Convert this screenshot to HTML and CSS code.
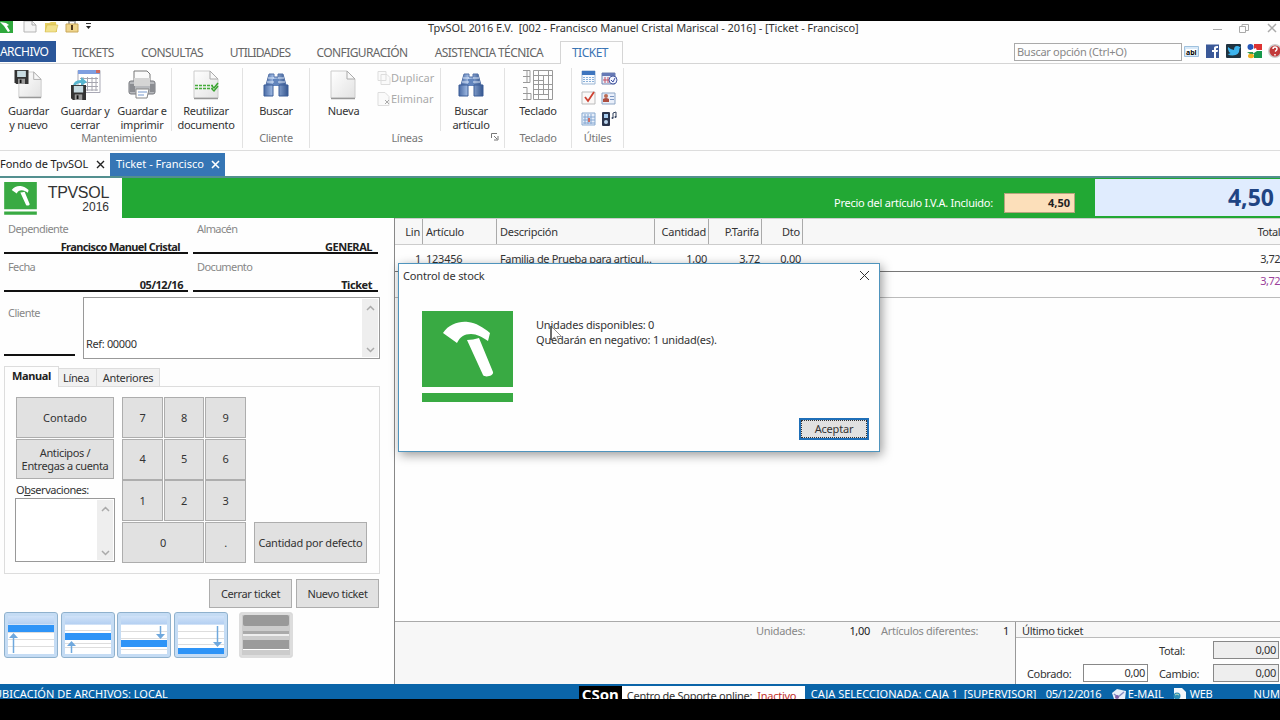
FILE: index.html
```html
<!DOCTYPE html>
<html lang="es">
<head>
    <meta charset="UTF-8">
    <title>TpvSOL 2016 E.V.</title>
    <link rel="stylesheet" href="styles.css">
</head>
<body>
    <!-- shared symbols -->
    <svg class="defs">
        <defs>
            <linearGradient id="paper" x1="0" y1="0" x2="1" y2="1"><stop offset="0" stop-color="#fff"/><stop offset="1" stop-color="#e2e2e2"/></linearGradient>
            <linearGradient id="steel" x1="0" x2="1"><stop offset="0" stop-color="#4a6ba5"/><stop offset=".4" stop-color="#a9c3ea"/><stop offset="1" stop-color="#35568f"/></linearGradient>
            <symbol id="sheet" viewBox="0 0 28 32">
                <path d="M2 2h16l8 8v19H2z" fill="url(#paper)" stroke="#ccc"/>
                <path d="M2 29.500h24" stroke="#999" stroke-width="1.500"/>
                <path d="M18 2v8h8z" fill="#f8f8f8" stroke="#aaa"/>
            </symbol>
            <symbol id="floppy" viewBox="0 0 16 16">
                <path d="M0 0h16v16H2l-2-2z" fill="#333"/>
                <path d="M3 1h10v7H3z" fill="#c9dce2"/>
                <path d="M4 10h8v6H4z" fill="#999"/><path d="M6 11h2v4H6z" fill="#111"/>
            </symbol>
            <symbol id="binoculars" viewBox="0 0 26 24">
                <path d="M6 1h5v3h4V1h5l3 11H3z" fill="url(#steel)" stroke="#5573a8"/>
                <path d="M10 6h6v7h-6z" fill="#6285bd"/>
                <path d="M1 12h9v11H1zM16 12h9v11h-9z" fill="url(#steel)" stroke="#3b5c97"/>
                <path d="M5 5h6M15 5h6M4 9h7M15 9h7" stroke="#dbe7f8"/>
            </symbol>
            <symbol id="hammer" viewBox="0 0 91 92">
                <path d="M0 0h91v76H0zM0 82h91v9H0z" fill="#39aa43"/>
                <path d="M21 22C27 13 37 10 46 11c8 1 15 5 22 11l-2 8c-6-4-11-7-17-7-7 0-11 3-14 9Z" fill="#fff"/>
                <path d="M45 29q6 0 12-2l14 34c1 4-8 6-10 3Z" fill="#fff"/>
            </symbol>
        </defs>
    </svg>

    <div class="app">
        <div class="titlebar">
            <div class="quick">
                <svg width="92" height="14" viewBox="0 0 92 14">
                    <path d="M0 0h13v12H0z" fill="#2fa83c"/><path d="M0 1l6 1 3 2-2 1 3 5-2 1-4-6z" fill="#fff"/>
                    <path d="M24 0h8l4 4v7H24z" fill="#f5f5f5" stroke="#b5b5b5"/><path d="M32 0v4h4" fill="none" stroke="#aaa"/>
                    <path d="M45 2h4l2-1h5l1 10H45z" fill="#e6cf62"/><path d="M47 4h11l-2 7H45z" fill="#f2e28c" stroke="#cdb344" stroke-width=".5"/>
                    <path d="M69 4V0h6v4" fill="none" stroke="#aaa" stroke-width="2"/><path d="M66 3h12v8H66z" fill="#efd58c" stroke="#c9a758"/><path d="M72 4v5" stroke="#513b20" stroke-width="2"/>
                    <path d="M86 2.500h5" stroke="#333"/><path d="M86 5h5l-2.500 3z" fill="#222"/>
                </svg>
            </div>
            <span class="caption">TpvSOL 2016 E.V.&nbsp; [002 - Francisco Manuel Cristal Mariscal - 2016] - [Ticket - Francisco]</span>
            <svg class="winbtns" width="72" height="14" viewBox="0 0 72 14">
                <g fill="none" stroke="#aaa"><path d="M5 8.500h9M31.500 5.500h6v6h-6zM34 5V3.500h6.500v6H38"/><path d="M60 3l8 8M68 3l-8 8" stroke-width="1.500"/></g>
            </svg>
        </div>

        <div class="menu">
            <div class="file">ARCHIVO</div>
            <div class="tab m1">TICKETS</div>
            <div class="tab m2">CONSULTAS</div>
            <div class="tab m3">UTILIDADES</div>
            <div class="tab m4">CONFIGURACIÓN</div>
            <div class="tab m5">ASISTENCIA TÉCNICA</div>
            <div class="tab active">TICKET</div>
            <div class="search">Buscar opción (Ctrl+O)</div>
            <svg class="social" width="96" height="16" viewBox="0 0 96 16">
                <path d="M.5 3.500h14v10H.5z" fill="#d8e9f8" stroke="#9fc1de"/><path d="M2 6h11v6H2z" fill="#fff"/>
                <text x="2" y="11.500" class="abl">abl</text>
                <path d="M22 1.500h13V15H22z" fill="#3b5998"/><path d="M30 15V9h-2V7h2V5q0-2 3-2h1v2h-1q-1 0-1 1v1h2l-.4 2H32v6z" fill="#fff"/>
                <rect x="42" y="1" width="15" height="14" rx="1" fill="#20323f"/><path d="M44 4q3 3 6 3q0-4 3-4q2 0 2.500 1l1.500-.5-1.500 2q0 7-7 7-3 0-5-1.500 2 0 3-1-2-1-2-2.500-1-1-.5-3.500z" fill="#3db4ee"/>
                <path d="M63 1h15v14H63z" fill="#fff"/><path d="M70 1h8v6h-8z" fill="#d33"/><path d="M70 8h8v7h-8z" fill="#16984a"/><circle cx="66.500" cy="4" r="3" fill="#2757b8"/><path d="M63 9h6l1 2h-4z" fill="#2c9950"/><ellipse cx="67" cy="13" rx="3" ry="2.200" fill="#eeb020"/><path d="M67 7l5-2 1 3-3 2z" fill="#fff"/>
                <circle cx="91" cy="8" r="7" fill="#ccc"/><circle cx="91" cy="8" r="5.500" fill="#c23a3a"/><path d="M89 6q0-2 2-2t2 2q0 1-2 2.500M91 11v1.500" fill="none" stroke="#fff" stroke-width="1.500"/>
            </svg>
        </div>

        <div class="ribbon">
            <div class="group">
                <div class="tools">
                    <div class="tool w57">
                        <svg width="32" height="32"><use href="#sheet" x="4" y="0" width="26" height="32"/><use href="#floppy" x="1" y="1" width="15" height="14"/></svg>
                        <span>Guardar<br>y nuevo</span>
                    </div>
                    <div class="tool w56">
                        <svg width="32" height="32">
                            <path d="M9 1.500h22v22H9z" fill="#fff" stroke="#a9a9b5"/><path d="M9 1h22v4H9z" fill="#7f9fe0"/><path d="M27 1h4v3h-4z" fill="#d06a5d"/>
                            <path d="M14 8v14M18.500 8v14M23 8v14M27 8v14M11 9.500h18M11 13.500h18M11 17.500h18M11 21h18" stroke="#a6a6b0"/>
                            <path d="M4 18q0-7 8-7V8l6 5-6 4v-3q-5 0-6 4z" fill="#58b6cf"/><use href="#floppy" x="2" y="16" width="15" height="15"/>
                        </svg>
                        <span>Guardar y<br>cerrar</span>
                    </div>
                    <div class="tool w58">
                        <svg width="30" height="32">
                            <path d="M7 2h13l3 3v10H7z" fill="#fafafa" stroke="#777"/><rect x="2" y="12" width="26" height="13" rx="2" fill="#b7b9bd" stroke="#75777c"/>
                            <path d="M3 15h5v8H3zM23 15h5v8h-5z" fill="#8b8d92"/><path d="M7 9h16v8H7z" fill="#d5d5d5"/><path d="M9 20h13l-2 9H9z" fill="#fff" stroke="#888"/><path d="M11 23h9M11 26h6" stroke="#7798cc"/>
                        </svg>
                        <span>Guardar e<br>imprimir</span>
                    </div>
                    <div class="tool w71 cut">
                        <svg width="28" height="32"><use href="#sheet" width="28" height="32"/><path d="M3 16.500h18M3 19.500h18" stroke="#45ad3b" stroke-width="1.500" stroke-dasharray="3 1"/><path d="M20 17l2 2 4-5M20 20l2 2 4-5" fill="none" stroke="#38a42e" stroke-width="1.500"/></svg>
                        <span>Reutilizar<br>documento</span>
                    </div>
                </div>
                <div class="name n1">Mantenimiento</div>
            </div>
            <div class="group w67">
                <div class="tools"><div class="tool w67"><svg width="28" height="32"><use href="#binoculars" x="1" y="4" width="26" height="24"/></svg><span>Buscar</span></div></div>
                <div class="name">Cliente</div>
            </div>
            <div class="group">
                <div class="tools">
                    <div class="tool w66"><svg width="28" height="32"><use href="#sheet" x="-1" width="28" height="32"/></svg><span>Nueva</span></div>
                    <div class="small">
                        <div><svg width="14" height="16"><path d="M1 1.500h8v9H1zM4 4.500h6l3 3v7H4z" fill="#fafafa" stroke="#ddd"/></svg>Duplicar</div>
                        <div><svg width="14" height="16"><path d="M1 1.500h7l4 4v9H1z" fill="#fafafa" stroke="#ddd"/><path d="M8 9l4 4M12 9l-4 4" stroke="#aaa"/></svg>Eliminar</div>
                    </div>
                    <div class="tool w64 cut"><svg width="28" height="32"><use href="#binoculars" x="1" y="4" width="26" height="24"/></svg><span>Buscar<br>artículo</span></div>
                </div>
                <div class="name lines">Líneas<svg width="8" height="8"><path d="M.5 5V.5H6M3 3l3 3M7 3v4H3" fill="none" stroke="#777"/></svg></div>
            </div>
            <div class="group w67">
                <div class="tools"><div class="tool w67"><svg width="32" height="32"><path d="M1 1.500h7v12H1M5 2v12M1 7.500h7M1 18.500h4v12M1 24.500h8v6H1M11.500 1.500h19v29h-19zM16.500 2v28M21.500 7v18M26.500 2v28M12 6.500h19M12 11.500h9M12 15.500h19M12 20.500h19M12 25.500h15" fill="none" stroke="#999"/></svg><span>Teclado</span></div></div>
                <div class="name">Teclado</div>
            </div>
            <div class="group w52">
                <svg class="utils" width="40" height="60">
                    <g><path d="M3 2h13v13H3z" fill="#f7fafe" stroke="#9ab5d3"/><path d="M3 2h13v4H3z" fill="#3d75be"/><path d="M4 8.500h11M4 10.500h11M4 12.500h11" stroke="#89b0d8" stroke-dasharray="2 1"/></g>
                    <g><path d="M23 4h13v11H23z" fill="#e9effa" stroke="#7182ae"/><path d="M23 4h13v3H23z" fill="#6679b5"/><path d="M26 8v6M29 8v6M24 11h6" stroke="#c34e62"/><circle cx="34" cy="11" r="4" fill="#f2f5ff" stroke="#4a5ca2"/><path d="M32 11l2 2 2-4" fill="none" stroke="#3c4ea0"/></g>
                    <g><path d="M3 23h13v12H3z" fill="#faf8f7" stroke="#bbb"/><path d="M6 28l3 4 6-9" fill="none" stroke="#ce4131" stroke-width="1.800"/></g>
                    <g><path d="M23 24h13v11H23z" fill="#e9effa" stroke="#8da5c5"/><circle cx="27" cy="27" r="2" fill="#bc6b53"/><path d="M24 33v-3q3-2 6 0v3z" fill="#ad4d3f"/><path d="M31 27.500h4M31 30.500h4" stroke="#7b96c2"/></g>
                    <g><path d="M3 44h13v12H3z" fill="#e7effa" stroke="#88a9cf"/><path d="M6 45v10M9 45v10M12 45v10M4 48h12M4 51h12M4 54h12" stroke="#83a6d1"/><path d="M9 49h2v4H9z" fill="#cd6e66"/></g>
                    <g><rect x="23" y="43" width="8" height="14" rx="1" fill="#29344c"/><path d="M25 45h4v4h-4z" fill="#a7ccee"/><circle cx="27" cy="53" r="2" fill="#bbd4ec"/><path d="M34 49v-5l3-1v5" fill="none" stroke="#34435e"/><circle cx="33.500" cy="49" r="1" fill="#34435e"/><circle cx="36.500" cy="48" r="1" fill="#34435e"/></g>
                </svg>
                <div class="name">Útiles</div>
            </div>
        </div>

        <div class="docs">
            <div class="doc d1">Fondo de TpvSOL<svg width="9" height="9"><path d="M1 1l7 7M8 1L1 8" stroke="#222" stroke-width="1.400"/></svg></div>
            <div class="doc open">Ticket - Francisco<svg width="9" height="9"><path d="M1 1l7 7M8 1L1 8" stroke="#fff" stroke-width="1.600"/></svg></div>
        </div>

        <div class="brand">
            <div class="logo">
                <svg width="33" height="33"><use href="#hammer" width="33" height="33"/></svg>
                <div class="product"><b>TPVSOL</b><i>2016</i></div>
            </div>
            <span class="pricelabel">Precio del artículo I.V.A. Incluido:</span>
            <div class="price">4,50</div>
            <div class="total">4,50</div>
        </div>

        <div class="work">
            <div class="left">
                <div class="fields">
                    <div class="field"><label>Dependiente</label><b class="seller">Francisco Manuel Cristal</b></div>
                    <div class="field"><label>Almacén</label><b>GENERAL</b></div>
                    <div class="field"><label>Fecha</label><b class="date">05/12/16</b></div>
                    <div class="field"><label>Documento</label><b>Ticket</b></div>
                </div>
                <div class="client">
                    <div class="code">Cliente</div>
                    <div class="memo">
                        <span>Ref: 00000</span>
                        <div class="scroll"><svg width="9" height="6"><path d="M1 5l3.500-3.500L8 5"/></svg><svg width="9" height="6"><path d="M1 1l3.500 3.500L8 1"/></svg></div>
                    </div>
                </div>

                <div class="tabs"><b>Manual</b><span class="t2">Línea</span><span class="t3">Anteriores</span></div>
                <div class="panel">
                    <div class="col">
                        <div class="btn">Contado</div>
                        <div class="btn two">Anticipos /<br>Entregas a cuenta</div>
                        <div class="obs">O<u>b</u>servaciones:</div>
                        <div class="memo"><div class="scroll"><svg width="9" height="6"><path d="M1 5l3.500-3.500L8 5"/></svg><svg width="9" height="6"><path d="M1 1l3.500 3.500L8 1"/></svg></div></div>
                    </div>
                    <div class="keys">
                        <div class="btn">7</div><div class="btn">8</div><div class="btn">9</div>
                        <div class="btn">4</div><div class="btn">5</div><div class="btn">6</div>
                        <div class="btn">1</div><div class="btn">2</div><div class="btn">3</div>
                        <div class="btn zero">0</div><div class="btn">.</div>
                    </div>
                    <div class="btn qty">Cantidad por defecto</div>
                </div>
                <div class="actions"><div class="btn">Cerrar ticket</div><div class="btn">Nuevo ticket</div></div>

                <div class="nav">
                    <div class="navbtn"><svg width="46" height="38"><path d="M0 16.500h46M0 23.500h46M0 30.500h46" class="rule"/><path d="M0 9h46v7H0z" class="sel"/><path d="M5.500 37V20" class="stem"/><path d="M1 22h9l-4.500-5z" class="head-up"/></svg></div>
                    <div class="navbtn"><svg width="46" height="38"><path d="M0 14.500h46M0 27.500h46M0 31.500h46" class="rule"/><path d="M0 17h46v7H0z" class="sel"/><path d="M6.500 37V27" class="stem"/><path d="M2 30h9l-4.500-5z" class="head-up"/></svg></div>
                    <div class="navbtn"><svg width="46" height="38"><path d="M0 15.500h46M0 22.500h46M0 33.500h46" class="rule"/><path d="M0 24h46v7H0z" class="sel"/><path d="M39.500 10v10" class="stem"/><path d="M35 18h9l-4.500 5z" class="head-up"/></svg></div>
                    <div class="navbtn"><svg width="46" height="38"><path d="M0 15.500h46M0 22.500h46M0 28.500h46" class="rule"/><path d="M0 32h46v6H0z" class="sel"/><path d="M39.500 10v18" class="stem"/><path d="M35 26h9l-4.500 5z" class="head-up"/></svg></div>
                    <div class="navbtn off"><svg width="46" height="42"><rect width="46" height="11" rx="2" fill="#999"/><path d="M0 16h46v3H0z" fill="#aaa"/><path d="M0 19h46v2H0z" fill="#eee"/><rect y="25" width="46" height="9" fill="#9b9b9b"/><path d="M0 34h46v1H0z" fill="#fff"/></svg></div>
                </div>
            </div>

            <div class="right">
                <div class="row head">
                    <span class="c1">Lin</span><span class="c2">Artículo</span><span class="c3">Descripción</span><span class="c4">Cantidad</span><span class="c5">P.Tarifa</span><span class="c6">Dto</span><span class="c7">Total</span>
                </div>
                <div class="row">
                    <span class="c1">1</span><span class="c2">123456</span><span class="c3 desc">Familia de Prueba para articul...</span><span class="c4">1,00</span><span class="c5">3,72</span><span class="c6">0,00</span><span class="c7">3,72</span>
                </div>
                <div class="row sum"><span class="c7">3,72</span></div>
                <div class="blank"></div>
                <div class="foot">
                    <div class="counts"><span class="k1">Unidades:</span><em class="units">1,00</em><span class="k2">Artículos diferentes:</span><em>1</em></div>
                    <div class="last">
                        <div class="lasthead">Último ticket</div>
                        <div class="lastgrid">
                            <span></span><span></span><span>Total:</span><div class="num gray">0,00</div>
                            <span>Cobrado:</span><div class="num">0,00</div><span>Cambio:</span><div class="num gray">0,00</div>
                        </div>
                    </div>
                </div>
            </div>
        </div>

        <div class="status">
            <span class="place">UBICACIÓN DE ARCHIVOS: LOCAL</span>
            <span class="cson">CSon</span>
            <span class="support">Centro de Soporte online:&nbsp; <em>Inactivo</em></span>
            <span class="box">CAJA SELECCIONADA: CAJA 1&nbsp; [SUPERVISOR]</span>
            <span class="day">05/12/2016</span>
            <svg width="15" height="14"><path d="M1 6l5-4 9 2-1 8H3z" fill="#e8eef8"/><path d="M3 7l4 3 6-5" fill="none" stroke="#8890c4" stroke-width="1.500"/><circle cx="6" cy="10" r="2" fill="#8061a8"/></svg>
            <span class="mail">E-MAIL</span>
            <svg width="14" height="14"><path d="M1 1h8l4 4v9H1z" fill="#f4f7fa"/><circle cx="4" cy="9" r="3.500" fill="#2e8fb8"/><path d="M2 8q2-2 4 0" stroke="#bfe4ba" fill="none"/></svg>
            <span class="web">WEB</span>
            <span class="numlock">NUM</span>
        </div>
    </div>

    <div class="dialog">
        <div class="dtitle">Control de stock<svg width="11" height="11"><path d="M1 1l9 9M10 1l-9 9" stroke="#333"/></svg></div>
        <div class="dbody">
            <svg width="91" height="92"><use href="#hammer" width="91" height="92"/></svg>
            <p>Unidades disponibles: 0<br><span>Quedarán en negativo: 1 unidad(es).</span></p>
        </div>
        <div class="accept">Aceptar</div>
    </div>
    <svg class="cursor" width="13" height="18"><path d="M1 1v14l3.500-3 3 5 1.500-1-2-4.500h4.500z" fill="#fff" fill-opacity=".6" stroke="#777" stroke-width=".8"/><path d="M1 1v14" stroke="#111"/></svg>
</body>
</html>
```
FILE: styles.css
```css
* {
    box-sizing: border-box;
}

body {
    margin: 0;
    width: 1280px;
    height: 720px;
    padding: 21px 0;
    background: #000;
    overflow: hidden;
    font-family: "Noto Sans", "Open Sans", sans-serif;
    font-size: 11px;
    line-height: 14px;
    letter-spacing: -0.25px;
    color: #333;
    white-space: nowrap;
}

svg {
    display: block;
    flex: none;
}

i, em {
    font-style: normal;
}

.defs {
    position: absolute;
    width: 0;
    height: 0;
}

.app {
    height: 678px;
    background: #fefefe;
    display: flex;
    flex-direction: column;
    overflow: hidden;
}

/* title bar */
.titlebar {
    height: 20px;
    display: flex;
    justify-content: space-between;
}

.quick {
    width: 428px;
}

.caption {
    width: 784px;
    letter-spacing: -0.08px;
}

.winbtns {
    margin-left: -4px;
}

/* menu */
.menu {
    height: 23px;
    display: flex;
    border-bottom: 1px solid #d5d5d5;
    font-size: 12px;
    color: #666;
    line-height: 23px;
    letter-spacing: -0.6px;
}

.file {
    width: 56px;
    height: 21px;
    background: #2a5699;
    color: #fff;
    line-height: 22px;
    letter-spacing: -0.55px;
}

.tab {
    text-align: center;
}

.m1 { width: 74px; }
.m2 { width: 84px; }
.m3 { width: 92px; letter-spacing: -0.75px; }
.m4 { width: 112px; }
.m5 { width: 142px; }

.active {
    width: 63px;
    height: 23px;
    padding-right: 3px;
    border: 1px solid #d5d5d5;
    border-bottom: none;
    background: #fefefe;
    color: #3a74b4;
    line-height: 21px;
    letter-spacing: -0.5px;
}

.search {
    width: 168px;
    height: 18px;
    margin: 2px 2px 0 391px;
    padding-left: 2px;
    border: 1px solid #aaa;
    font-size: 11px;
    line-height: 15px;
    letter-spacing: -0.28px;
    color: #888;
}

.social {
    margin-top: 2px;
}

.abl {
    font-size: 7px;
    font-weight: bold;
    letter-spacing: 0;
}

/* ribbon */
.ribbon {
    height: 87px;
    display: flex;
    border-bottom: 1px solid #ddd;
}

.group {
    height: 80px;
    margin-top: 4px;
    border-right: 1px solid #e2e2e2;
    text-align: center;
}

.tools {
    display: flex;
    height: 63px;
}

.tool {
    display: flex;
    flex-direction: column;
    align-items: center;
    padding-top: 1px;
}

.tool span {
    margin-top: 3px;
}

.cut {
    border-left: 1px solid #e2e2e2;
}

.w52 { width: 52px; }
.w56 { width: 56px; }
.w57 { width: 57px; }
.w58 { width: 58px; }
.w64 { width: 64px; padding-right: 3px; }
.w66 { width: 67px; }
.w67 { width: 67px; }
.w71 { width: 71px; padding-right: 2px; }

.name {
    color: #777;
    letter-spacing: -0.3px;
}

.n1 {
    margin-left: -4px;
}

.small {
    width: 63px;
    padding-top: 2px;
    color: #aaa;
    letter-spacing: 0;
}

.small div {
    display: flex;
    height: 21px;
    line-height: 15px;
}

.lines {
    position: relative;
}

.lines svg {
    position: absolute;
    right: 5px;
    top: 2px;
}

.utils {
    margin: 1px 0 2px 7px;
}

/* document tabs */
.docs {
    height: 27px;
    padding-top: 2px;
    display: flex;
    border-bottom: 2px solid #538f8f;
}

.doc {
    display: flex;
    align-items: center;
    justify-content: space-between;
    padding: 0 5px 1px 0;
    color: #222;
    letter-spacing: -0.08px;
}

.d1 {
    width: 110px;
}

.open {
    width: 115px;
    padding-left: 6px;
    background: #3676b5;
    color: #fff;
    letter-spacing: 0;
}

/* brand strip */
.brand {
    height: 40px;
    display: flex;
    background: #22a834;
}

.logo {
    width: 122px;
    display: flex;
    background: #fefefe;
    padding: 4px 13px 0 4px;
    justify-content: space-between;
}

.product {
    font-family: "Liberation Sans", sans-serif;
    text-align: right;
    color: #333;
    letter-spacing: 0;
}

.product b {
    display: block;
    font-size: 16px;
    font-weight: normal;
    line-height: 22px;
    letter-spacing: -0.3px;
}

.product i {
    display: block;
    font-size: 12px;
    line-height: 7px;
}

.pricelabel {
    width: 170px;
    margin-left: 712px;
    padding-top: 18px;
    color: #fff;
}

.price {
    width: 71px;
    height: 20px;
    margin-top: 15px;
    padding-right: 4px;
    background: #fcdfba;
    border: 1px solid #b8a47e;
    text-align: right;
    font-weight: bold;
    line-height: 18px;
    letter-spacing: 0;
    color: #222;
}

.total {
    width: 185px;
    height: 37px;
    margin: 1px 0 0 20px;
    padding-right: 6px;
    background: #e0ecfe;
    text-align: right;
    font-size: 23px;
    font-weight: bold;
    line-height: 36px;
    letter-spacing: 0;
    color: #1f4483;
}

.work {
    height: 466px;
    display: flex;
}

/* left side */
.left {
    width: 394px;
    padding: 0 14px 0 4px;
}

.fields {
    display: grid;
    grid-template-columns: 184px 185px;
    grid-auto-rows: 38px;
    column-gap: 5px;
}

.field {
    height: 36px;
    padding: 4px 6px 0 4px;
    border-bottom: 2px solid #111;
}

.field label {
    display: block;
    color: #888;
    letter-spacing: -0.6px;
}

.field b {
    display: block;
    margin-top: 4px;
    text-align: right;
    letter-spacing: -0.45px;
    color: #222;
}

.field .seller {
    padding-right: 2px;
    letter-spacing: -0.6px;
}

.field .date {
    margin-right: -1px;
}

.client {
    display: flex;
    gap: 8px;
    margin-top: 3px;
}

.code {
    width: 71px;
    height: 59px;
    padding: 9px 4px;
    border-bottom: 2px solid #111;
    color: #888;
    letter-spacing: -0.55px;
}

.memo {
    display: flex;
    border: 1px solid #999;
    background: #fff;
}

.client .memo {
    width: 297px;
    height: 62px;
}

.memo span {
    padding: 39px 2px 0;
    letter-spacing: -0.35px;
}

.scroll {
    width: 16px;
    margin: 1px 1px 1px auto;
    background: #eee;
    display: flex;
    flex-direction: column;
    align-items: center;
    justify-content: space-between;
    padding: 6px 0 4px;
}

.scroll path {
    fill: none;
    stroke: #aaa;
    stroke-width: 1.5;
}

.tabs {
    display: flex;
    align-items: flex-end;
    margin-top: 7px;
    height: 20px;
    letter-spacing: -0.35px;
}

.tabs b, .tabs span {
    height: 18px;
    border: 1px solid #ddd;
    border-bottom: none;
    background: #f1f1f1;
    text-align: center;
    line-height: 18px;
}

.tabs b {
    width: 55px;
    height: 21px;
    margin-bottom: -1px;
    background: #fefefe;
    z-index: 1;
    color: #222;
}

.tabs .t2 { width: 38px; padding-right: 3px; border-left: none; }
.tabs .t3 { width: 63px; border-left: none; }

.panel {
    width: 376px;
    height: 188px;
    padding: 10px 0 0 11px;
    border: 1px solid #ddd;
    display: flex;
}

.btn {
    display: flex;
    align-items: center;
    justify-content: center;
    text-align: center;
    background: #e1e1e1;
    border: 1px solid #adadad;
    line-height: 12px;
}

.col {
    width: 98px;
    margin-right: 8px;
}

.col .btn {
    height: 41px;
    margin-bottom: 1px;
    letter-spacing: 0;
}

.col .two {
    height: 40px;
    line-height: 13px;
    letter-spacing: -0.35px;
}

.obs {
    height: 18px;
    padding-top: 3px;
    letter-spacing: -0.45px;
}

.col .memo {
    width: 100px;
    height: 64px;
    margin-left: -1px;
}

.keys {
    display: grid;
    grid-template-columns: 41px 40px 41px;
    grid-auto-rows: 41px;
    gap: 0.7px 1px;
    height: 166px;
}

.zero {
    grid-column: span 2;
}

.qty {
    width: 113px;
    height: 41px;
    margin: 125px 0 0 8px;
}

.actions {
    display: flex;
    justify-content: flex-end;
    gap: 4px;
    margin-top: 5px;
    padding-right: 1px;
    letter-spacing: -0.35px;
}

.actions .btn {
    width: 83px;
    height: 29px;
}

.nav {
    display: flex;
    gap: 2.7px;
    margin-top: 4px;
}

.navbtn {
    width: 54px;
    height: 46px;
    padding: 3px;
    border: 1px solid #8fb1cd;
    border-radius: 3px;
    background: linear-gradient(#dbe9fa, #b4d0f2 25%, #fff 28%, #fff 92%, #cfe2f7);
    box-shadow: inset 0 0 0 3px #c5dcf4;
}

.navbtn .rule { stroke: #ddd; }
.navbtn .sel { fill: #2e94f7; }
.navbtn .stem { stroke: #6fa8dd; stroke-width: 1.5; }
.navbtn .head-up { fill: #6fa8dd; }

.navbtn.off {
    margin-left: 8px;
    padding-top: 2px;
    background: #ccc;
    border-color: #ddd;
    box-shadow: inset 0 0 0 2px #ddd;
}

/* ticket lines */
.right {
    flex: 1;
    border-left: 1px solid #888;
    display: flex;
    flex-direction: column;
}

.row {
    height: 26px;
    display: flex;
    line-height: 27px;
}

.head {
    height: 27px;
    background: #f7f7f7;
    border-top: 1px solid #ccc;
    border-bottom: 1px solid #ccc;
}

.head span {
    border-right: 1px solid #aaa;
    line-height: 25px;
}

.c1 { width: 28px; padding-right: 2px; text-align: right; }
.c2 { width: 74px; padding-left: 3px; }
.c3 { width: 158px; padding-left: 3px; }
.c4 { width: 54px; padding-right: 2px; text-align: right; }
.c5 { width: 53px; padding-right: 2px; text-align: right; }
.c6 { width: 41px; padding-right: 2px; text-align: right; }
.c7 { flex: 1; text-align: right; letter-spacing: -0.5px; }
.head .c7 { border: none; }

.desc {
    letter-spacing: -0.35px;
}

.sum {
    height: 27px;
    border-top: 1px solid #777;
    border-bottom: 1px solid #bbb;
    line-height: 17px;
    color: #9a3f9a;
}

.blank {
    flex: 1;
    background: #fefefe;
}

.foot {
    height: 63px;
    display: flex;
    border-top: 1px solid #aaa;
    background: #f7f7f7;
}

.counts {
    width: 620px;
    padding: 2px 6px 0 361px;
    display: flex;
    color: #888;
    letter-spacing: -0.3px;
}

.counts em {
    margin-left: auto;
    color: #222;
}

.k1 { width: 84px; }
.k2 { margin-left: 11px; }

.counts .units {
    width: 30px;
    margin-left: 0;
    text-align: right;
}

.last {
    flex: 1;
    border-left: 1px solid #999;
    letter-spacing: -0.35px;
}

.lasthead {
    height: 16px;
    padding: 2px 6px 0;
    border-bottom: 1px solid #bbb;
}

.lastgrid {
    height: 46px;
    padding: 3px 0 0 11px;
    background: #fefefe;
    display: grid;
    grid-template-columns: 56px 65px 44px 66px;
    grid-auto-rows: 18px;
    row-gap: 5px;
    justify-content: start;
    line-height: 20px;
}

.lastgrid span:nth-child(3), .lastgrid span:nth-child(7) {
    margin-left: 11px;
}

.lastgrid .num {
    border: 1px solid #888;
    background: #fff;
    padding-right: 2px;
    text-align: right;
    line-height: 16px;
}

.lastgrid .gray {
    margin-left: 21px;
    background: #eee;
    width: 66px;
}

/* status bar */
.status {
    height: 15px;
    display: flex;
    overflow: hidden;
    background: #0b65a9;
    color: #fff;
    line-height: 20px;
    letter-spacing: 0;
}

.place {
    width: 585px;
    margin-left: -6px;
}

.cson {
    width: 43px;
    height: 15px;
    margin-top: 2px;
    padding-left: 3px;
    background: #000;
    font-size: 15px;
    font-weight: bold;
    line-height: 17px;
}

.support {
    width: 183px;
    height: 15px;
    margin-top: 2px;
    padding-left: 5px;
    background: #fff;
    color: #333;
    line-height: 19px;
    letter-spacing: -0.28px;
}

.support em { color: #c3322e; }
.box { width: 241px; padding-left: 6px; }
.day { width: 65px; letter-spacing: -0.3px; }
.mail { width: 47px; padding-left: 2px; }
.web { width: 66px; padding-left: 3px; letter-spacing: -0.2px; }
.numlock { padding-left: 1px; }

.status svg {
    margin-top: 3px;
}

/* message box over the ticket */
.dialog {
    position: absolute;
    left: 398px;
    top: 263px;
    width: 482px;
    height: 189px;
    background: #fefefe;
    border: 1px solid #4f94bd;
    box-shadow: 2px 3px 10px rgba(0, 0, 0, 0.4);
    letter-spacing: -0.2px;
}

.dtitle {
    display: flex;
    justify-content: space-between;
    align-items: center;
    height: 23px;
    padding: 0 9px 0 4px;
    letter-spacing: -0.15px;
}

.dbody {
    display: flex;
    gap: 23px;
    padding: 24px 0 0 23px;
}

.dbody p {
    margin: 7px 0 0;
    line-height: 14.500px;
}

.accept {
    width: 70px;
    height: 22px;
    margin: 15px 0 0 400px;
    border: 2px solid #1f6fb8;
    outline: 1px dotted #333;
    outline-offset: -3px;
    background: #e1e1e1;
    text-align: center;
    line-height: 18px;
}

.cursor {
    position: absolute;
    left: 550px;
    top: 325px;
}
```
